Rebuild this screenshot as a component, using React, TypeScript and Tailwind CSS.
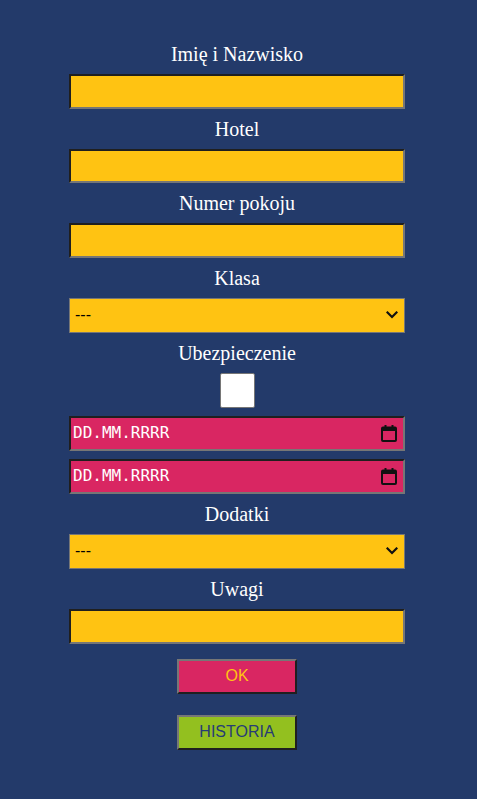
import { useState } from "react"

const serif = { fontFamily: '"Liberation Serif", "Times New Roman", serif' }

function Label({ children }: { children: string }) {
    return (
        <label className="h-[24px] leading-[24px] text-[20px] text-white text-center" style={serif}>
            {children}
        </label>
    )
}

function TextField({ value, onChange }: { value: string; onChange: (v: string) => void }) {
    return (
        <input
            type="text"
            value={value}
            onChange={(e) => onChange(e.target.value)}
            className="w-[336px] h-[34.67px] bg-[#ffc312] border-2 border-t-[#1f1f1f] border-l-[#1f1f1f] border-b-[#767676] border-r-[#767676] px-1 text-black outline-none"
        />
    )
}

function FakeSelect() {
    return (
        <div className="w-[336px] h-[35px] bg-[#ffc312] border border-[#767676] flex items-center justify-between pl-[5px] pr-[6px] text-[16px] text-black font-['Liberation_Sans',Arial,sans-serif]">
            <span>---</span>
            <svg width="12" height="8" viewBox="0 0 12 8" fill="none">
                <path d="M1.5 1.5 L6 6 L10.5 1.5" stroke="#111" strokeWidth="2.2" strokeLinecap="square" />
            </svg>
        </div>
    )
}

function DateField() {
    return (
        <div className="w-[336px] h-[35px] bg-[#d92662] border-2 border-t-[#1f1f1f] border-l-[#1f1f1f] border-b-[#767676] border-r-[#767676] flex items-center justify-between pl-[2px] pr-[6px]">
            <span className="text-[16px] text-white font-['DejaVu_Sans_Mono',monospace]">DD.MM.RRRR</span>
            <svg width="16" height="17" viewBox="0 0 16 17" fill="none">
                <rect x="1" y="2.5" width="14" height="13.5" rx="1" stroke="#111" strokeWidth="2" />
                <rect x="1" y="2.5" width="14" height="3.5" fill="#111" />
                <rect x="3.5" y="0" width="2" height="3" fill="#111" />
                <rect x="10.5" y="0" width="2" height="3" fill="#111" />
            </svg>
        </div>
    )
}

export default function App() {
    const [name, setName] = useState("")
    const [hotel, setHotel] = useState("")
    const [room, setRoom] = useState("")
    const [notes, setNotes] = useState("")
    const [insured, setInsured] = useState(false)

    return (
        <div className="min-h-[799px] bg-[#233a6a] flex flex-col items-center pt-[42px] pr-[3px]">
            <div className="flex flex-col items-center gap-2">
                <Label>Imię i Nazwisko</Label>
                <TextField value={name} onChange={setName} />
                <Label>Hotel</Label>
                <TextField value={hotel} onChange={setHotel} />
                <Label>Numer pokoju</Label>
                <TextField value={room} onChange={setRoom} />
                <Label>Klasa</Label>
                <FakeSelect />
                <Label>Ubezpieczenie</Label>
                <button
                    type="button"
                    onClick={() => setInsured(!insured)}
                    className="w-[35px] h-[35px] bg-white border border-[#767676] rounded-[2px]"
                />
                <DateField />
                <DateField />
                <Label>Dodatki</Label>
                <FakeSelect />
                <Label>Uwagi</Label>
                <TextField value={notes} onChange={setNotes} />
            </div>

            {/* przyciski */}
            <div className="flex flex-col items-center gap-[21px] mt-[15px] font-['Liberation_Sans',Arial,sans-serif] text-[16px]">
                <button className="w-[120px] h-[35px] bg-[#d92662] text-[#ffc312] border-2 border-t-[#767676] border-l-[#767676] border-b-[#1f1f1f] border-r-[#1f1f1f]">
                    OK
                </button>
                <button className="w-[120px] h-[35px] bg-[#93c01f] text-[#273c75] border-2 border-t-[#767676] border-l-[#767676] border-b-[#1f1f1f] border-r-[#1f1f1f]">
                    HISTORIA
                </button>
            </div>
        </div>
    )
}
